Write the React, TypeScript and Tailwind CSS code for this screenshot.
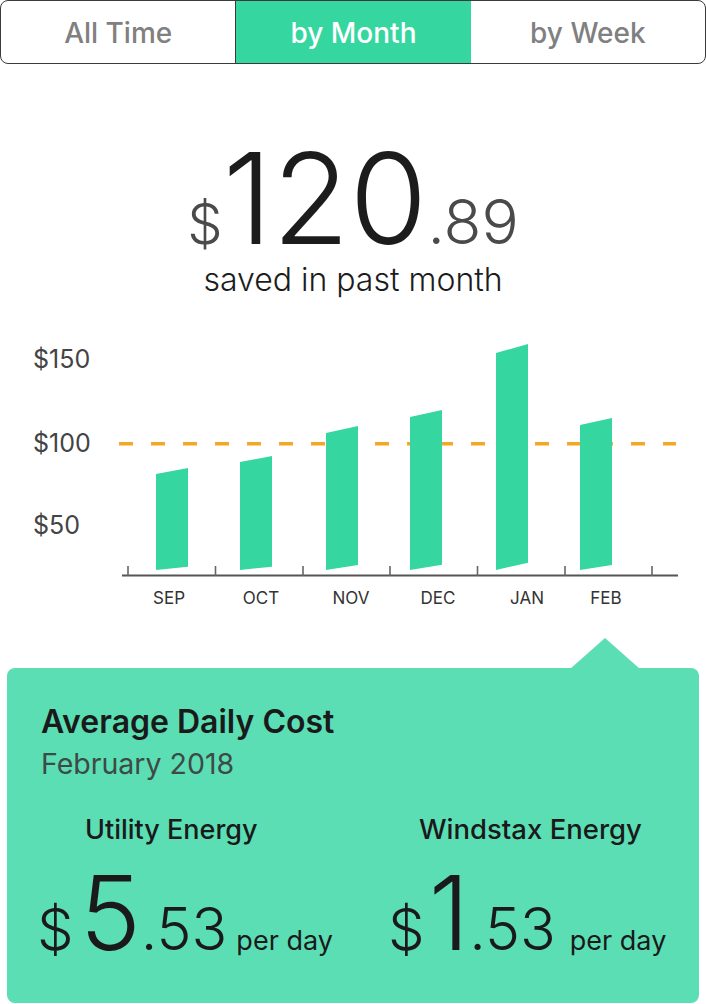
import React from 'react';

const tabs = ['All Time', 'by Month', 'by Week'];

const bars = [
  { month: 'SEP', x: 156, top: [144, 138], bottom: [240, 236.7], label: 169 },
  { month: 'OCT', x: 240, top: [132, 126], bottom: [240, 236.7], label: 261 },
  { month: 'NOV', x: 326, top: [103, 96], bottom: [240, 235], label: 351 },
  { month: 'DEC', x: 410, top: [87, 80], bottom: [240, 234.7], label: 438 },
  { month: 'JAN', x: 496, top: [23, 14], bottom: [240, 232.7], label: 527 },
  { month: 'FEB', x: 580, top: [95, 88], bottom: [240, 235], label: 606 },
];

const ticks = [128, 215.5, 303, 390, 477.5, 565, 652];

const Chart = () => (
  <svg width="706" height="290" viewBox="0 0 706 290" className="block">
    <g fontFamily="Inter, sans-serif" fill="#444" fontSize="25">
      <text x="33" y="38">$150</text>
      <text x="33" y="122">$100</text>
      <text x="33" y="204">$50</text>
    </g>
    <line x1="119" x2="676" y1="113.7" y2="113.7" stroke="#f5a623" strokeWidth="3.4" strokeDasharray="14 18" />
    {bars.map((b) => (
      <polygon
        key={b.month}
        fill="#36d6a0"
        points={`${b.x},${b.top[0]} ${b.x + 32},${b.top[1]} ${b.x + 32},${b.bottom[1]} ${b.x},${b.bottom[0]}`}
      />
    ))}
    <line x1="122" x2="678" y1="245.5" y2="245.5" stroke="#555" strokeWidth="2" />
    {ticks.map((t) => (
      <line key={t} x1={t} x2={t} y1="236" y2="246" stroke="#666" strokeWidth="1.6" />
    ))}
    <g fontFamily="Inter, sans-serif" fill="#333" fontSize="17" textAnchor="middle">
      {bars.map((b) => (
        <text key={b.month} x={b.label} y="274">{b.month}</text>
      ))}
    </g>
  </svg>
);

const Amount = ({ whole, cents, dollarGap, unitGap }: { whole: string; cents: string; dollarGap: string; unitGap: string }) => (
  <div className="flex items-baseline whitespace-nowrap leading-none text-[#1a1a1a]">
    <span className={`text-[58px] font-light ${dollarGap}`}>$</span>
    <span className="text-[103px] font-light">{whole}</span>
    <span className="text-[59px] font-light">.{cents}</span>
    <span className={`text-[27px] ${unitGap}`}>per day</span>
  </div>
);

export default function App() {
  return (
    <div className="w-[706px] h-[1004px] overflow-hidden bg-white font-[family-name:Inter,sans-serif]">
      <div className="flex h-[64px] overflow-hidden rounded-lg border-[1.5px] border-[#3a3a3a]">
        {tabs.map((tab, i) => (
          <div
            key={tab}
            className={`flex flex-1 items-center justify-center pt-[1px] text-[28px] font-medium ${
              i === 1 ? 'bg-[#36d6a0] text-white' : 'text-[#808080]'
            } ${i === 0 ? 'border-r-[1.5px] border-[#3a3a3a]' : ''}`}
          >
            {tab}
          </div>
        ))}
      </div>

      <div className="mt-[71px] flex items-baseline justify-center leading-none">
        <span className="text-[56px] font-light text-[#4a4a4a]">$</span>
        <span className="text-[126px] font-light text-[#1c1c1c]">120</span>
        <span className="text-[62px] font-light text-[#4a4a4a]">.89</span>
      </div>
      <div className="mt-[3px] text-center text-[32px] font-light leading-none text-[#1c1c1c]">
        saved in past month
      </div>

      <div className="mt-[34px]">
        <Chart />
      </div>

      <div className="relative mt-[18px] px-[7px] pt-[30px]">
        <svg className="absolute left-[570px] top-0" width="70" height="31" viewBox="0 0 70 31">
          <polygon points="0,31 35,0 70,31" fill="#5cdeb5" />
        </svg>
        <div className="h-[335px] rounded-lg bg-[#5cdeb5] pt-[38px]">
          <div className="pl-[34px]">
            <div className="text-[32px] font-semibold leading-none text-[#1a1a1a]">Average Daily Cost</div>
            <div className="mt-[12px] text-[28.5px] leading-none text-[#3d4a45]">February 2018</div>
          </div>
          <div className="mt-[37px] grid grid-cols-2">
            <div className="pl-[30px]">
              <div className="ml-[48px] text-[27px] font-medium leading-none text-[#1a1a1a]">Utility Energy</div>
              <div className="mt-[18px]">
                <Amount whole="5" cents="53" dollarGap="mr-[6px]" unitGap="ml-[9px]" />
              </div>
            </div>
            <div className="pl-[35px]">
              <div className="ml-[31px] text-[27.5px] font-medium leading-none text-[#1a1a1a]">Windstax Energy</div>
              <div className="mt-[18px]">
                <Amount whole="1" cents="53" dollarGap="mr-[4px]" unitGap="ml-[14px]" />
              </div>
            </div>
          </div>
        </div>
      </div>
    </div>
  );
}
